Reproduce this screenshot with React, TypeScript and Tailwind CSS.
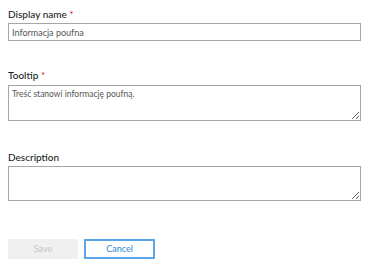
export default function App() {
  return (
    <div
      className="w-[380px] h-[269px] bg-white px-2 pt-[6px]"
      style={{ fontFamily: 'Lato, "Open Sans", sans-serif' }}
    >
      <div className="w-[353px]">
        <label className="block text-[10px] leading-[16px] font-medium text-[#201f1e] mb-[1px]">
          Display name <span className="text-[#c4262c]">*</span>
        </label>
        <input
          defaultValue="Informacja poufna"
          className="block w-full h-[18px] border border-[#a6a6a6] px-[3px] text-[9px] text-[#555] outline-none"
        />

        <label className="block mt-[26px] text-[10px] leading-[16px] font-medium text-[#201f1e] mb-[2px]">
          Tooltip <span className="text-[#c4262c]">*</span>
        </label>
        <textarea
          defaultValue="Treść stanowi informację poufną."
          className="block w-full h-[36px] border border-[#a6a6a6] px-[3px] py-[2px] text-[8.5px] leading-[12px] text-[#555] outline-none"
        />

        <label className="block mt-[28px] text-[10px] leading-[16px] font-medium text-[#201f1e] mb-[1px]">
          Description
        </label>
        <textarea className="block w-full h-[35px] border border-[#a6a6a6] px-[3px] py-[2px] text-[9px] text-[#555] outline-none" />

        <div className="flex gap-[6px] mt-[38px]">
          <button
            disabled
            className="w-[70px] h-[20px] bg-[#f0f0f0] text-[9px] text-[#c6c6c6]"
          >
            Save
          </button>
          <button className="w-[71px] h-[20px] border-2 border-[#5aa5e8] bg-white text-[9px] text-[#2b88d8]">
            Cancel
          </button>
        </div>
      </div>
    </div>
  );
}
